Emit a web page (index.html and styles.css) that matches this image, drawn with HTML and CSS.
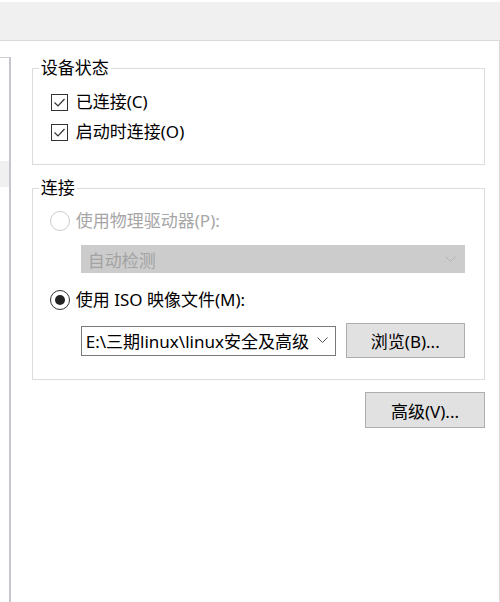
FILE: index.html
```html
<!DOCTYPE html>
<html lang="zh-CN">
<head>
<meta charset="utf-8">
<title>CD/DVD</title>
<link rel="stylesheet" href="styles.css">
</head>
<body>
<div class="topbar"></div>
<div class="main">
  <div class="sidebar"><div class="sel"></div></div>
  <div class="content">
    <fieldset class="group g1">
      <legend>设备状态</legend>
      <label class="row"><span class="cb"><svg width="15" height="15" viewBox="0 0 15 15"><path d="M2.5 7.5 L6 11 L12.5 4" fill="none" stroke="#333" stroke-width="1.2"/></svg></span>已连接(C)</label>
      <label class="row"><span class="cb"><svg width="15" height="15" viewBox="0 0 15 15"><path d="M2.5 7.5 L6 11 L12.5 4" fill="none" stroke="#333" stroke-width="1.2"/></svg></span>启动时连接(O)</label>
    </fieldset>
    <fieldset class="group g2">
      <legend>连接</legend>
      <div class="row disabled"><span class="radio"></span>使用物理驱动器(P):</div>
      <div class="select dis"><span>自动检测</span><svg width="11" height="7" viewBox="0 0 11 7"><path d="M0.5 0.5 L5.5 5.5 L10.5 0.5" fill="none" stroke="#b4b4b4" stroke-width="1"/></svg></div>
      <div class="row r2"><span class="radio on"><span class="dot"></span></span>使用 ISO 映像文件(M):</div>
      <div class="iso-row">
        <div class="combo"><span>E:\三期linux\linux安全及高级</span><svg width="11" height="7" viewBox="0 0 11 7"><path d="M0.5 0.5 L5.5 5.5 L10.5 0.5" fill="none" stroke="#555" stroke-width="1"/></svg></div>
        <button class="btn browse">浏览(B)...</button>
      </div>
    </fieldset>
    <div class="actions"><button class="btn adv">高级(V)...</button></div>
  </div>
</div>
</body>
</html>
```
FILE: styles.css
```css
html, body {
  margin: 0;
  padding: 0;
  background: #fff;
}
body {
  width: 500px;
  height: 602px;
  overflow: hidden;
  font-family: "Noto Sans", "Noto Sans CJK SC", sans-serif;
  font-size: 17px;
  color: #000;
}
.topbar {
  margin-top: 2px;
  height: 38px;
  background: #f0f0f0;
  border-bottom: 1px solid #dadada;
}
.main {
  display: flex;
  height: 561px;
}
.sidebar {
  width: 9px;
  margin-top: 16px;
  border-top: 1px solid #cfcfcf;
  border-right: 2px solid #c6c6ce;
  padding-top: 103px;
}
.sel {
  height: 26px;
  background: #f0f0f0;
}
.content {
  width: 466px;
  padding: 18px 14px 0 21px;
  border-right: 1px solid #dadada;
}
.group {
  margin: 0;
  padding: 10px 18px 17px 18px;
  border: 1px solid #dcdcdc;
  min-width: 0;
}
.group legend {
  margin-left: -12px;
  padding: 0 2px;
  line-height: 18px;
  font-size: 17px;
}
.g2 {
  margin-top: 14px;
  padding-top: 9px;
  padding-bottom: 21px;
}
.row {
  display: flex;
  align-items: center;
  height: 30px;
  line-height: 30px;
  white-space: nowrap;
}
.cb {
  width: 15px;
  height: 15px;
  border: 1px solid #333;
  margin-right: 8px;
  display: flex;
}
.radio {
  width: 18px;
  height: 18px;
  border: 1px solid #333;
  border-radius: 50%;
  margin-left: -1px;
  margin-right: 6px;
  display: flex;
  align-items: center;
  justify-content: center;
  box-sizing: content-box;
}
.disabled {
  color: #a6a6a6;
}
.disabled .radio {
  border-color: #cccccc;
}
.dot {
  width: 10px;
  height: 10px;
  border-radius: 50%;
  background: #222;
}
.select {
  margin-top: 9px;
  margin-left: 30px;
  width: 384px;
  height: 28px;
  box-sizing: border-box;
  display: flex;
  align-items: center;
  justify-content: space-between;
  padding: 0 8px 0 6px;
}
.select.dis {
  background: #cccccc;
  border: 1px solid #cccccc;
  color: #a3a3a3;
}
.r2 {
  margin-top: 12px;
}
.iso-row {
  margin-top: 8px;
  margin-left: 30px;
  height: 35px;
  display: flex;
  align-items: center;
}
.combo {
  width: 255px;
  height: 30px;
  box-sizing: border-box;
  border: 1px solid #7a7a7a;
  background: #fff;
  display: flex;
  align-items: center;
  justify-content: space-between;
  padding: 0 7px 0 4px;
  white-space: nowrap;
}
.btn {
  font-family: "Noto Sans", "Noto Sans CJK SC", sans-serif;
  font-size: 17px;
  color: #000;
  background: #e1e1e1;
  border: 1px solid #adadad;
  padding: 0;
  box-sizing: border-box;
}
.browse {
  margin-left: 10px;
  width: 119px;
  height: 35px;
}
.actions {
  margin-top: 12px;
  display: flex;
  justify-content: flex-end;
}
.adv {
  width: 120px;
  height: 36px;
}
```
